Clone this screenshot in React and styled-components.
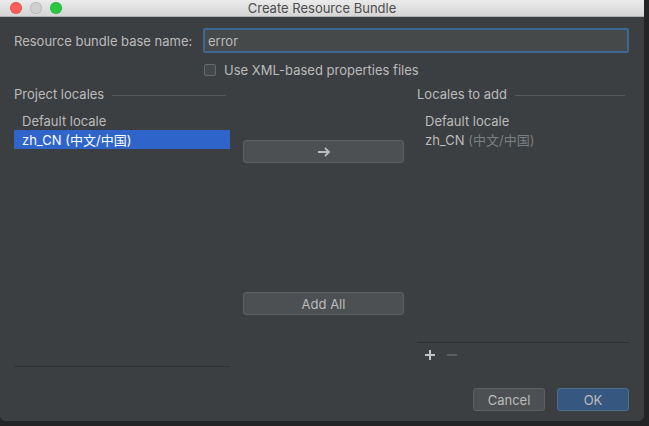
import React from "react";
import styled, { createGlobalStyle } from "styled-components";

const GlobalStyle = createGlobalStyle`
  html, body {
    margin: 0;
    padding: 0;
    background: #232426;
  }
  body {
    font-family: Inter, "Noto Sans CJK SC", sans-serif;
    -webkit-font-smoothing: antialiased;
  }
`;

const Screen = styled.div`
  width: 649px;
  height: 426px;
  background: #232426;
  overflow: hidden;
`;

const Window = styled.div`
  width: 644px;
  height: 421px;
  background: #3c3f41;
  border-radius: 0 0 5px 5px;
  display: flex;
  flex-direction: column;
  overflow: hidden;
`;

const TitleBar = styled.div`
  height: 16px;
  flex-shrink: 0;
  background: linear-gradient(#ebebeb, #d5d5d5);
  border-bottom: 1px solid #b1b1b1;
  display: flex;
  align-items: center;
  position: relative;
`;

const Lights = styled.div`
  display: flex;
  gap: 8px;
  padding-left: 10px;
`;

const Light = styled.span`
  width: 12px;
  height: 12px;
  border-radius: 50%;
  background: ${({ $c }) => $c};
  box-shadow: inset 0 0 0 0.5px rgba(0, 0, 0, 0.18);
`;

const Title = styled.div`
  position: absolute;
  left: 0;
  right: 0;
  top: 0;
  bottom: 0;
  display: flex;
  align-items: center;
  justify-content: center;
  font-size: 13px;
  color: #4d4d4d;
  pointer-events: none;
`;

const Body = styled.div`
  padding: 11px 15px 0 14px;
  display: flex;
  flex-direction: column;
  color: #bbbbbb;
  font-size: 13px;
`;

const FormRow = styled.div`
  display: flex;
  align-items: center;
  height: 25px;
`;

const Label = styled.label`
  width: 189px;
  flex-shrink: 0;
`;

const Input = styled.div`
  flex: 1;
  height: 25px;
  box-sizing: border-box;
  border: 2px solid #3f6793;
  border-radius: 2px;
  background: #45494a;
  padding-left: 3px;
  display: flex;
  align-items: center;
  color: #bbbbbb;
`;

const CheckRow = styled.div`
  margin-top: 10px;
  padding-left: 190px;
  display: flex;
  align-items: center;
  gap: 8px;
  height: 14px;
`;

const Box = styled.span`
  width: 12px;
  height: 12px;
  box-sizing: border-box;
  border: 1px solid #666a6c;
  border-radius: 2px;
  background: #43494a;
`;

const Columns = styled.div`
  margin-top: 10px;
  display: grid;
  grid-template-columns: 216px 161px 1fr;
  column-gap: 13px;
`;

const Column = styled.div`
  display: flex;
  flex-direction: column;
`;

const Header = styled.div`
  display: flex;
  align-items: center;
  height: 14px;
  &::after {
    content: "";
    flex: 1;
    height: 1px;
    background: #55595b;
    margin: 2px 4px 0 8px;
  }
`;

const List = styled.div`
  margin-top: 10px;
  height: ${({ $h }) => $h}px;
  border-bottom: 1px solid #2e3133;
  display: flex;
  flex-direction: column;
`;

const Item = styled.div`
  height: 19px;
  display: flex;
  align-items: center;
  padding-left: 8px;
  color: ${({ $sel }) => ($sel ? "#ffffff" : "#bbbbbb")};
  background: ${({ $sel }) => ($sel ? "#2f65ca" : "transparent")};
`;

const Dim = styled.span`
  color: #7b7e80;
`;

const Button = styled.div`
  height: 23px;
  box-sizing: border-box;
  width: ${({ $w }) => ($w ? `${$w}px` : "auto")};
  margin-top: ${({ $mt }) => $mt || 0}px;
  border: 1px solid ${({ $primary }) => ($primary ? "#4c708c" : "#5e6060")};
  border-radius: 3px;
  background: ${({ $primary }) => ($primary ? "#365880" : "#4c5052")};
  color: #bbbbbb;
  display: flex;
  align-items: center;
  justify-content: center;
  font-size: 13px;
`;

const Toolbar = styled.div`
  height: 24px;
  display: flex;
  align-items: center;
  gap: 10px;
  padding-left: 7px;
`;

const ToolIcon = styled.svg`
  width: 12px;
  height: 12px;
  stroke: ${({ $off }) => ($off ? "#5b5f61" : "#c4c4c4")};
  stroke-width: 2;
`;

const Footer = styled.div`
  margin-top: 21px;
  display: flex;
  justify-content: flex-end;
  gap: 12px;
`;

export default function App() {
  return (
    <Screen>
      <GlobalStyle />
      <Window>
        <TitleBar>
          <Lights>
            <Light $c="#fc5f57" />
            <Light $c="#cfcfcf" />
            <Light $c="#2ac840" />
          </Lights>
          <Title>Create Resource Bundle</Title>
        </TitleBar>
        <Body>
          <FormRow>
            <Label>Resource bundle base name:</Label>
            <Input>error</Input>
          </FormRow>
          <CheckRow>
            <Box />
            <span>Use XML-based properties files</span>
          </CheckRow>
          <Columns>
            <Column>
              <Header>Project locales</Header>
              <List $h={255}>
                <Item>Default locale</Item>
                <Item $sel>zh_CN (中文/中国)</Item>
              </List>
            </Column>
            <Column>
              <Button $mt={53}>
                <svg width="14" height="10" viewBox="0 0 14 10" fill="none" stroke="#bbbbbb" strokeWidth="1.8">
                  <path d="M1 5h11M8 1l4 4-4 4" />
                </svg>
              </Button>
              <Button $mt={129}>Add All</Button>
            </Column>
            <Column>
              <Header>Locales to add</Header>
              <List $h={231}>
                <Item>Default locale</Item>
                <Item>
                  zh_CN&nbsp;<Dim>(中文/中国)</Dim>
                </Item>
              </List>
              <Toolbar>
                <ToolIcon viewBox="0 0 12 12">
                  <path d="M6 1v10M1 6h10" />
                </ToolIcon>
                <ToolIcon viewBox="0 0 12 12" $off>
                  <path d="M1 6h10" />
                </ToolIcon>
              </Toolbar>
            </Column>
          </Columns>
          <Footer>
            <Button $w={72}>Cancel</Button>
            <Button $w={72} $primary>OK</Button>
          </Footer>
        </Body>
      </Window>
    </Screen>
  );
}
